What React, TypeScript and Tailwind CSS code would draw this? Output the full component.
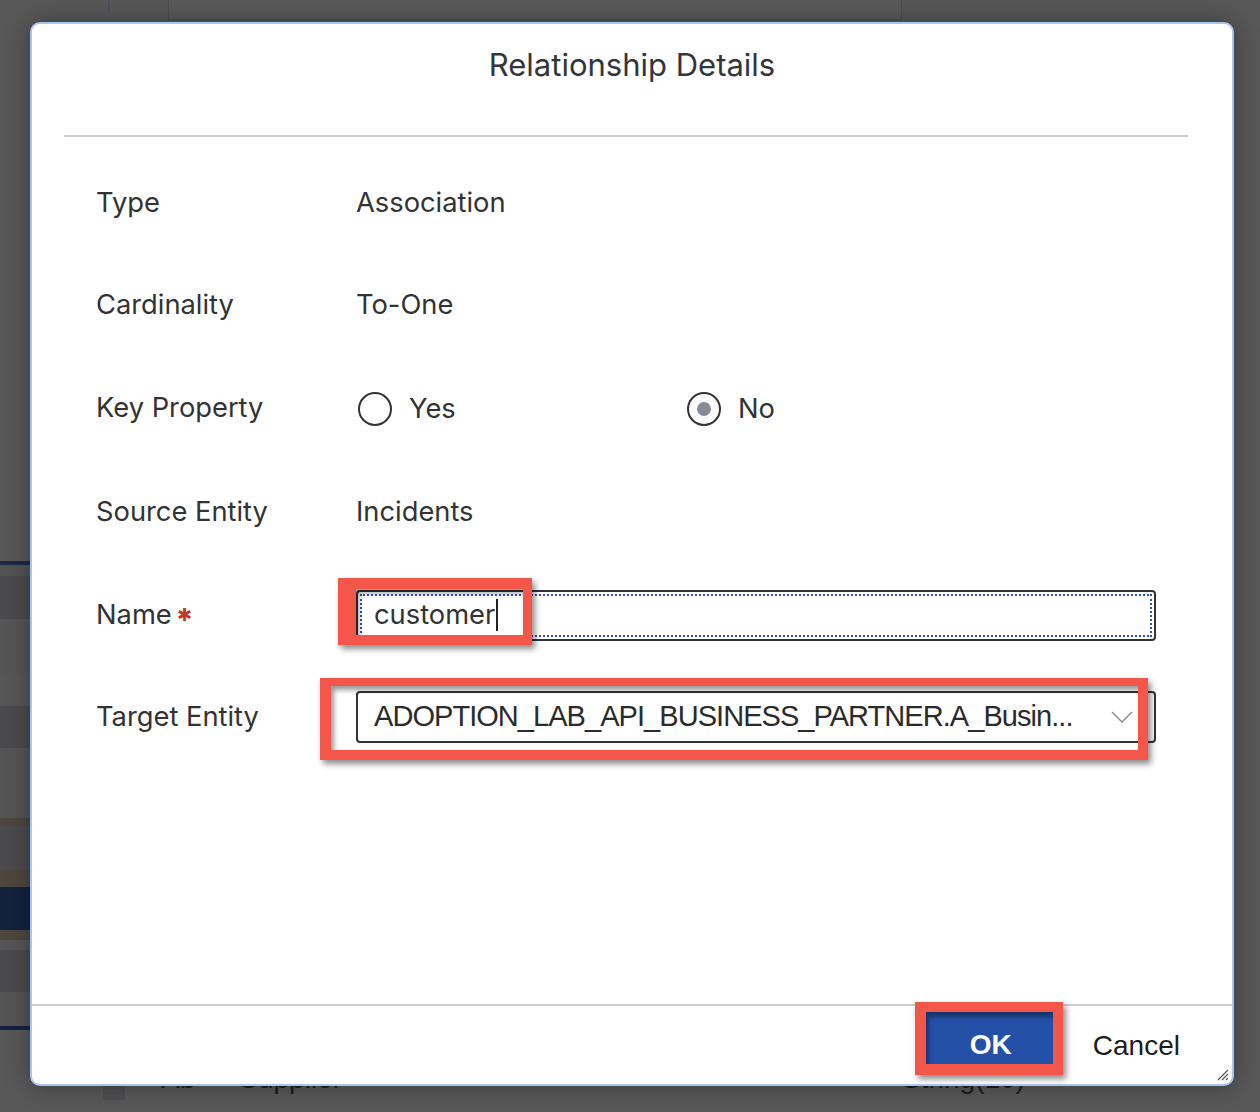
import React from "react";

const strips = [
  { h: 541, c: "bg-[#585858]" },
  { h: 4, c: "bg-[#1c2a44]" },
  { h: 11, c: "bg-[#535353]" },
  { h: 43, c: "bg-[#4b4b4e]" },
  { h: 54, c: "bg-[#555555]" },
  { h: 33, c: "bg-[#575757]" },
  { h: 42, c: "bg-[#4b4b4e]" },
  { h: 70, c: "bg-[#555555]" },
  { h: 8, c: "bg-[#4d473e]" },
  { h: 44, c: "bg-[#4b4b4e]" },
  { h: 17, c: "bg-[#4d473e]" },
  { h: 43, c: "bg-[#13223d]" },
  { h: 10, c: "bg-[#4d473e]" },
  { h: 10, c: "bg-[#555555]" },
  { h: 42, c: "bg-[#4b4b4e]" },
  { h: 34, c: "bg-[#555555]" },
  { h: 4, c: "bg-[#13223d]" },
];

function Row({ label, h, children }: { label: React.ReactNode; h: string; children: React.ReactNode }) {
  return (
    <div className={`flex items-center ${h}`}>
      <div className="w-[260px] shrink-0">{label}</div>
      <div className="flex flex-1 items-center">{children}</div>
    </div>
  );
}

function Radio({ checked, label, w }: { checked?: boolean; label: string; w: string }) {
  return (
    <div className={`flex items-center ${w}`}>
      <span className="ml-[2px] flex h-[34px] w-[34px] items-center justify-center rounded-full border-2 border-[#333333]">
        {checked && <span className="h-[14px] w-[14px] rounded-full bg-[#878c96]" />}
      </span>
      <span className="ml-[17px]">{label}</span>
    </div>
  );
}

export default function App() {
  return (
    <div className="relative h-[1112px] w-[1260px] overflow-hidden bg-[#585858] font-['Inter',sans-serif]">
      {/* dimmed page behind the dialog */}
      <div className="flex h-full flex-col">
        <div className="flex h-[20px] shrink-0">
          <div className="w-[108px]" />
          <div className="h-[10px] w-[2px] bg-[#4a5263]" />
          <div className="w-[58px]" />
          <div className="w-[734px] border-b border-l border-r border-[#4e4e4e] bg-[#5a5a5a]" />
        </div>
        <div className="flex flex-1">
          <div className="flex w-[30px] flex-col">
            {strips.map((s, i) => (
              <div key={i} className={`${s.c} shrink-0`} style={{ height: s.h }} />
            ))}
          </div>
          <div className="flex flex-1 flex-col justify-end">
            <div className="flex h-[56px] items-start pt-[2px] font-['Liberation_Sans',sans-serif] text-[28px] text-[#1b1b1b]">
              <div className="ml-[73px] mt-[14px] h-[28px] w-[22px] bg-[#4f4f52]" />
              <span className="ml-[36px]">Ab</span>
              <span className="ml-[44px]">Supplier</span>
              <span className="ml-[560px]">String(10)</span>
            </div>
          </div>
        </div>
      </div>

      {/* dialog */}
      <div className="absolute left-[30px] top-[22px] flex h-[1064px] w-[1204px] flex-col rounded-[10px] border-2 border-[#a8c7f0] bg-white text-[27.3px] text-[#333333] shadow-[0_0_24px_rgba(0,0,0,0.35)]">
        <div className="flex h-[82px] items-center justify-center text-[31px] text-[#32363a]">Relationship Details</div>
        <div className="h-[29px]" />
        <div className="ml-[32px] mr-[44px] h-[2px] bg-[#cccccc]" />

        <div className="flex flex-1 flex-col pl-[64px] pt-[15px]">
          <Row label="Type" h="h-[102px]">Association</Row>
          <Row label="Cardinality" h="h-[102px]">To-One</Row>
          <Row label="Key Property" h="h-[104px]">
            <div className="flex translate-y-[1px] items-center">
              <Radio label="Yes" w="w-[329px]" />
              <Radio checked label="No" w="w-[200px]" />
            </div>
          </Row>
          <Row label="Source Entity" h="h-[104px]">Incidents</Row>
          <Row
            label={
              <span className="flex items-center">
                Name<span className="ml-[5px] text-[18px] leading-none text-[#c0392b]">✱</span>
              </span>
            }
            h="h-[102px]"
          >
            <div className="relative h-[51px] w-[800px]">
              <div className="flex h-full items-center rounded-[4px] border-2 border-[#333333] pl-[16px] outline-2 outline-offset-[-6px] outline-dotted outline-[#2a55b4]">
                <span>customer</span>
                <span className="ml-[1px] h-[32px] w-[2px] bg-[#222222]" />
              </div>
              <div className="pointer-events-none absolute left-[-18px] top-[-12px] h-[67px] w-[194px] border-b-[10px] border-l-[18px] border-r-[9px] border-t-[11px] border-[#f5564a] shadow-[3px_4px_6px_rgba(0,0,0,0.45),inset_3px_4px_5px_rgba(0,0,0,0.4)]" />
            </div>
          </Row>
          <Row label="Target Entity" h="h-[102px]">
            <div className="relative h-[52px] w-[800px]">
              <div className="flex h-full items-center justify-between rounded-[4px] border-2 border-[#333333] pl-[16px] pr-[21px]">
                <span className="font-['Liberation_Sans',sans-serif] text-[29px] tracking-[-0.95px] text-[#2b2b2b]">
                  ADOPTION_LAB_API_BUSINESS_PARTNER.A_Busin...
                </span>
                <svg width="22" height="12" viewBox="0 0 22 12" fill="none">
                  <path d="M1 1l10 10L21 1" stroke="#8d929a" strokeWidth="1.6" />
                </svg>
              </div>
              <div className="pointer-events-none absolute left-[-36px] top-[-13px] h-[82px] w-[828px] border-b-[10px] border-l-[11px] border-r-[10px] border-t-[8px] border-[#f5564a] shadow-[3px_4px_6px_rgba(0,0,0,0.45),inset_3px_4px_5px_rgba(0,0,0,0.4)]" />
            </div>
          </Row>
        </div>

        <div className="h-[2px] bg-[#cccccc]" />
        <div className="relative flex h-[78px] items-start justify-end pr-[52px] font-['Liberation_Sans',sans-serif]">
          <div className="mt-[-4px] h-[73px] w-[148px] border-b-[11px] border-l-[11px] border-r-[10px] border-t-[10px] border-[#f5564a] shadow-[3px_4px_6px_rgba(0,0,0,0.45)]">
            <button className="flex h-full w-full items-center justify-center bg-[#2450a8] pl-[3px] pt-[14px] text-[28px] font-bold text-white shadow-[inset_3px_5px_4px_rgba(0,0,0,0.35)]">
              OK
            </button>
          </div>
          <span className="ml-[30px] mt-[19px] text-[28px] text-[#1c1c1c]">Cancel</span>
          <svg className="absolute bottom-[3px] right-[3px]" width="13" height="13" viewBox="0 0 13 13">
            <path d="M12 2L2 12M12 6L6 12M12 10L10 12" stroke="#555555" strokeWidth="1.2" />
          </svg>
        </div>
      </div>
    </div>
  );
}
